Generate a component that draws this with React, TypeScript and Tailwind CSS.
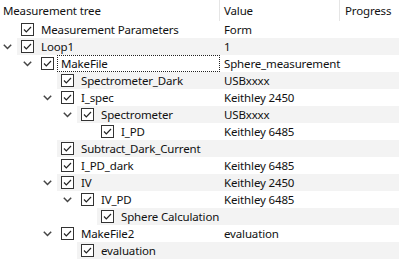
import React from "react";

type Row = { label: string; depth: number; expandable?: boolean; value?: string; focus?: boolean };

const rows: Row[] = [
  { label: "Measurement Parameters", depth: 0, value: "Form" },
  { label: "Loop1", depth: 0, expandable: true, value: "1" },
  { label: "MakeFile", depth: 1, expandable: true, value: "Sphere_measurement", focus: true },
  { label: "Spectrometer_Dark", depth: 2, value: "USBxxxx" },
  { label: "I_spec", depth: 2, expandable: true, value: "Keithley 2450" },
  { label: "Spectrometer", depth: 3, expandable: true, value: "USBxxxx" },
  { label: "I_PD", depth: 4, value: "Keithley 6485" },
  { label: "Subtract_Dark_Current", depth: 2, value: "" },
  { label: "I_PD_dark", depth: 2, value: "Keithley 6485" },
  { label: "IV", depth: 2, expandable: true, value: "Keithley 2450" },
  { label: "IV_PD", depth: 3, expandable: true, value: "Keithley 6485" },
  { label: "Sphere Calculation", depth: 4, value: "" },
  { label: "MakeFile2", depth: 2, expandable: true, value: "evaluation" },
  { label: "evaluation", depth: 3, value: "" },
];

function Chevron() {
  return (
    <svg width="9" height="6" viewBox="0 0 9 6" className="block">
      <polyline points="0.8,0.8 4.5,4.5 8.2,0.8" fill="none" stroke="#444" strokeWidth="1.5" />
    </svg>
  );
}

function Check() {
  return (
    <div className="w-[13px] h-[13px] border border-[#333] bg-white flex items-center justify-center shrink-0">
      <svg width="11" height="11" viewBox="0 0 11 11" className="block">
        <polyline points="2,5.5 4.3,7.8 9,3" fill="none" stroke="#222" strokeWidth="1.2" />
      </svg>
    </div>
  );
}

export default function App() {
  return (
    <div
      className="w-[399px] h-[272px] bg-white text-[11.5px] tracking-[-0.15px] text-[#111] overflow-hidden"
      style={{ fontFamily: '"Noto Sans", "Open Sans", sans-serif' }}
    >
      <div className="flex h-[21px] items-center">
        <div className="w-[220px] h-full flex items-center pl-[3px] border-r border-[#e5e5e5]">Measurement tree</div>
        <div className="w-[120px] h-full flex items-center pl-[4px] border-r border-[#e5e5e5]">Value</div>
        <div className="flex-1 h-full flex items-center pl-[5px]">Progress</div>
      </div>
      {rows.map((r, i) => {
        const bg = i % 2 === 1 ? "bg-[#f3f3f3]" : "bg-white";
        const indent = r.depth * 20;
        return (
          <div key={i} className="flex h-[17px] leading-[17px]">
            <div className="flex shrink-0 bg-white" style={{ width: indent + 17 }}>
              <div style={{ width: indent }} />
              <div className="w-[17px] flex items-center pl-[3px]">{r.expandable ? <Chevron /> : null}</div>
            </div>
            <div className={`flex flex-1 ${bg}`}>
              <div className="flex items-center shrink-0" style={{ width: 220 - indent - 17 }}>
                <div className="ml-[4px]">
                  <Check />
                </div>
                <div
                  className={`ml-[3px] flex-1 h-full pl-[3px] flex items-center border whitespace-nowrap ${
                    r.focus ? "border-dotted border-[#222]" : "border-transparent"
                  }`}
                >
                  {r.label}
                </div>
              </div>
              <div className="w-[120px] pl-[4px] whitespace-nowrap">{r.value}</div>
              <div className="flex-1" />
            </div>
          </div>
        );
      })}
    </div>
  );
}
